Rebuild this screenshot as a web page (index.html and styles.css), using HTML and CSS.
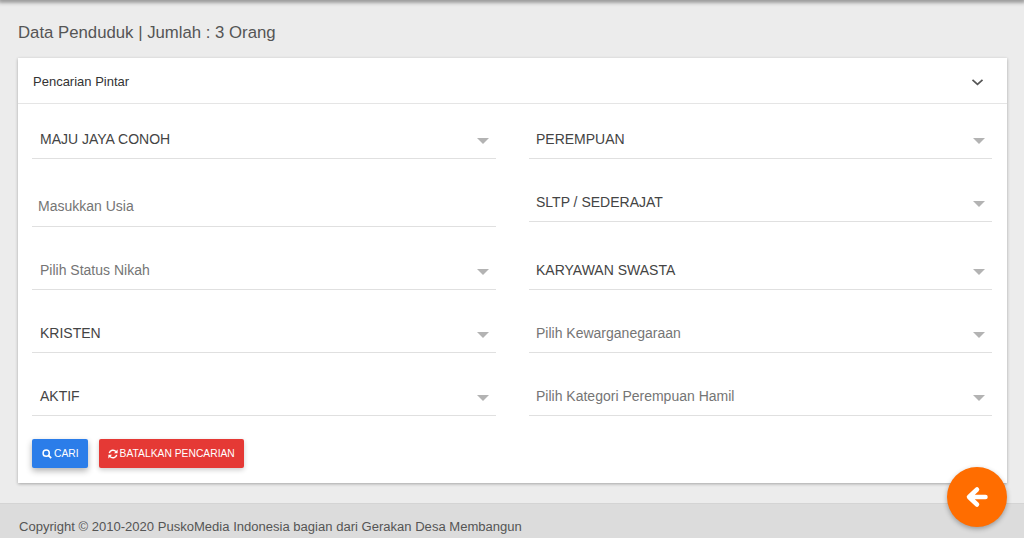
FILE: index.html
```html
<!DOCTYPE html>
<html lang="id">
<head>
<meta charset="utf-8">
<title>Data Penduduk</title>
<link rel="stylesheet" href="styles.css">
</head>
<body>
<div class="topbar"></div>
<main class="content">
  <h1 class="title">Data Penduduk | Jumlah : 3 Orang</h1>
  <section class="card">
    <header class="card-head">
      <span>Pencarian Pintar</span>
      <svg class="chev" width="14" height="14" viewBox="0 0 14 14"><path d="M1.500 4.800 6.500 9.300l5-4.500" fill="none" stroke="#555" stroke-width="1.700"/></svg>
    </header>
    <div class="card-body">
      <div class="grid">
        <div class="field"><span class="val">MAJU JAYA CONOH</span><i class="caret"></i></div>
        <div class="field right"><span class="val">PEREMPUAN</span><i class="caret"></i></div>
        <div class="field input"><span class="ph">Masukkan Usia</span></div>
        <div class="field right second-row"><span class="val">SLTP / SEDERAJAT</span><i class="caret"></i></div>
        <div class="field"><span class="ph">Pilih Status Nikah</span><i class="caret"></i></div>
        <div class="field right"><span class="val">KARYAWAN SWASTA</span><i class="caret"></i></div>
        <div class="field"><span class="val">KRISTEN</span><i class="caret"></i></div>
        <div class="field right"><span class="ph">Pilih Kewarganegaraan</span><i class="caret"></i></div>
        <div class="field"><span class="val">AKTIF</span><i class="caret"></i></div>
        <div class="field right"><span class="ph">Pilih Kategori Perempuan Hamil</span><i class="caret"></i></div>
      </div>
      <div class="actions">
        <button class="btn blue"><svg width="10" height="10" viewBox="0 0 10 10"><circle cx="4.200" cy="4.200" r="3.100" fill="none" stroke="#fff" stroke-width="1.500"/><path d="M6.400 6.400 9.200 9.200" stroke="#fff" stroke-width="1.800"/></svg>CARI</button>
        <button class="btn red"><svg width="10" height="10" viewBox="0 0 10 10"><path d="M1.300 4.200A3.800 3.800 0 0 1 8 2.600" fill="none" stroke="#fff" stroke-width="1.500"/><path d="M9.600 0.600v3.600H6z" fill="#fff"/><path d="M8.700 5.800A3.800 3.800 0 0 1 2 7.400" fill="none" stroke="#fff" stroke-width="1.500"/><path d="M0.400 9.400V5.800H4z" fill="#fff"/></svg>BATALKAN PENCARIAN</button>
      </div>
    </div>
  </section>
</main>
<footer class="footer">Copyright © 2010-2020 PuskoMedia Indonesia bagian dari Gerakan Desa Membangun</footer>
<button class="fab" aria-label="Kembali"><svg width="24" height="24" viewBox="0 0 24 24"><path d="M20.500 12H5M12 4.500 4 12l8 7.500" fill="none" stroke="#fff" stroke-width="4.500" stroke-linecap="round" stroke-linejoin="round"/></svg></button>
</body>
</html>
```
FILE: styles.css
```css
* { box-sizing: border-box; }
html, body { margin: 0; height: 538px; overflow: hidden; }
body {
  background: #ececec;
  font-family: "Liberation Sans", Arial, sans-serif;
  color: #4f4f4f;
  position: relative;
  display: flex;
  flex-direction: column;
}
.topbar {
  height: 0;
  box-shadow: 0 0 4px 2px rgba(0,0,0,.5);
}
.content { padding: 0 17px 0 18px; flex: 1; }
.title {
  margin: 23px 0 0;
  font-size: 16.75px;
  font-weight: 400;
  line-height: 19px;
  color: #555;
}
.card {
  margin-top: 16px;
  background: #fff;
  box-shadow: 0 1px 3px rgba(0,0,0,.3);
  height: 425px;
}
.card-head {
  height: 46px;
  border-bottom: 1px solid #e5e5e5;
  padding: 2px 22px 0 15px;
  display: flex;
  align-items: center;
  justify-content: space-between;
  font-size: 13px;
  color: #333;
}
.card-body { padding: 0 15px 0 14px; }
.grid {
  display: grid;
  grid-template-columns: 464px 463px;
  column-gap: 33px;
  grid-template-rows: 55px 68px 63px 63px 63px;
  align-items: end;
}
.field {
  height: 40px;
  border-bottom: 1px solid #e0e0e0;
  display: flex;
  align-items: center;
  justify-content: space-between;
  padding: 0 8px;
  font-size: 14px;
  align-self: end;
}
.field.right { padding-left: 7px; }
.second-row { align-self: start; margin-top: 23px; }
.field.input { padding: 0 8px 2px 6px; }
.val { color: #444; }
.ph { color: #757575; }
.caret {
  width: 0; height: 0;
  margin: 4px -1px 0 0;
  border-left: 6px solid transparent;
  border-right: 6px solid transparent;
  border-top: 6px solid #b3b3b3;
}
.actions { display: flex; gap: 11px; margin-top: 23px; }
.btn {
  height: 29px;
  border: 0;
  border-radius: 2px;
  color: #fff;
  font: 400 10.3px "Liberation Sans", Arial, sans-serif;
  display: inline-flex;
  align-items: center;
  gap: 2px;
  padding: 0 9px;
  box-shadow: 0 2px 5px rgba(0,0,0,.2);
}
.blue { background: #2b7de9; padding: 0 9px 0 10px; box-shadow: 0 3px 6px rgba(0,0,0,.3); }
.red { background: #e53935; }
.footer {
  height: 35px;
  flex: none;
  background: #dcdcdc;
  border-top: 1px solid #d4d4d4;
  padding: 15px 19px 0;
  font-size: 13.05px;
  line-height: 16px;
  color: #555;
}
.fab {
  position: absolute;
  left: 947px;
  top: 467px;
  width: 60px;
  height: 60px;
  border: 0;
  border-radius: 50%;
  background: #ff6d00;
  box-shadow: 0 2px 5px rgba(0,0,0,.3);
  display: flex;
  align-items: center;
  justify-content: center;
  padding: 0;
}
```
